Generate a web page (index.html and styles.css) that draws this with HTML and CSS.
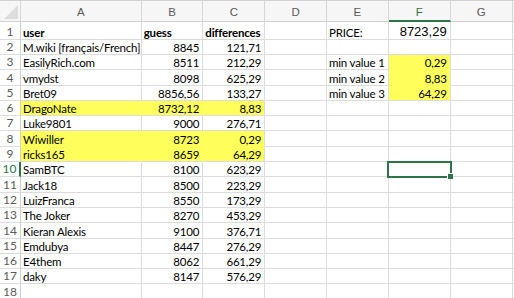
FILE: index.html
```html
<!DOCTYPE html>
<html lang="fr">
<head>
<meta charset="utf-8">
<title>Sheet</title>
<link rel="stylesheet" href="styles.css">
</head>
<body>
<div class="sheet">
  <div class="row hdr">
    <div class="corner"><span class="tri"></span></div>
    <div class="ch">A</div><div class="ch">B</div><div class="ch">C</div><div class="ch">D</div><div class="ch">E</div><div class="ch act">F</div><div class="ch">G</div><div class="ch"></div>
  </div>
  <div class="row">
    <div class="rh">1</div><div class="c b">user</div><div class="c b">guess</div><div class="c b">differences</div><div class="c"></div><div class="c">PRICE:</div><div class="c n big">8723,29</div><div class="c"></div><div class="c"></div>
  </div>
  <div class="row">
    <div class="rh">2</div><div class="c">M.wiki [français/French]</div><div class="c n">8845</div><div class="c n">121,71</div><div class="c"></div><div class="c"></div><div class="c"></div><div class="c"></div><div class="c"></div>
  </div>
  <div class="row">
    <div class="rh">3</div><div class="c">EasilyRich.com</div><div class="c n">8511</div><div class="c n">212,29</div><div class="c"></div><div class="c">min value 1</div><div class="c n y yb">0,29</div><div class="c"></div><div class="c"></div>
  </div>
  <div class="row">
    <div class="rh">4</div><div class="c">vmydst</div><div class="c n">8098</div><div class="c n">625,29</div><div class="c"></div><div class="c">min value 2</div><div class="c n y yb">8,83</div><div class="c"></div><div class="c"></div>
  </div>
  <div class="row">
    <div class="rh">5</div><div class="c">Bret09</div><div class="c n">8856,56</div><div class="c n">133,27</div><div class="c"></div><div class="c">min value 3</div><div class="c n y">64,29</div><div class="c"></div><div class="c"></div>
  </div>
  <div class="row">
    <div class="rh">6</div><div class="c y yr">DragoNate</div><div class="c n y yr">8732,12</div><div class="c n y">8,83</div><div class="c"></div><div class="c"></div><div class="c"></div><div class="c"></div><div class="c"></div>
  </div>
  <div class="row">
    <div class="rh">7</div><div class="c">Luke9801</div><div class="c n">9000</div><div class="c n">276,71</div><div class="c"></div><div class="c"></div><div class="c"></div><div class="c"></div><div class="c"></div>
  </div>
  <div class="row">
    <div class="rh">8</div><div class="c y yr yb">Wiwiller</div><div class="c n y yr yb">8723</div><div class="c n y yb">0,29</div><div class="c"></div><div class="c"></div><div class="c"></div><div class="c"></div><div class="c"></div>
  </div>
  <div class="row">
    <div class="rh">9</div><div class="c y yr">ricks165</div><div class="c n y yr">8659</div><div class="c n y">64,29</div><div class="c"></div><div class="c"></div><div class="c"></div><div class="c"></div><div class="c"></div>
  </div>
  <div class="row">
    <div class="rh act">10</div><div class="c">SamBTC</div><div class="c n">8100</div><div class="c n">623,29</div><div class="c"></div><div class="c"></div><div class="c sel"></div><div class="c"></div><div class="c"></div>
  </div>
  <div class="row">
    <div class="rh">11</div><div class="c">Jack18</div><div class="c n">8500</div><div class="c n">223,29</div><div class="c"></div><div class="c"></div><div class="c"></div><div class="c"></div><div class="c"></div>
  </div>
  <div class="row">
    <div class="rh">12</div><div class="c">LuizFranca</div><div class="c n">8550</div><div class="c n">173,29</div><div class="c"></div><div class="c"></div><div class="c"></div><div class="c"></div><div class="c"></div>
  </div>
  <div class="row">
    <div class="rh">13</div><div class="c">The Joker</div><div class="c n">8270</div><div class="c n">453,29</div><div class="c"></div><div class="c"></div><div class="c"></div><div class="c"></div><div class="c"></div>
  </div>
  <div class="row">
    <div class="rh">14</div><div class="c">Kieran Alexis</div><div class="c n">9100</div><div class="c n">376,71</div><div class="c"></div><div class="c"></div><div class="c"></div><div class="c"></div><div class="c"></div>
  </div>
  <div class="row">
    <div class="rh">15</div><div class="c">Emdubya</div><div class="c n">8447</div><div class="c n">276,29</div><div class="c"></div><div class="c"></div><div class="c"></div><div class="c"></div><div class="c"></div>
  </div>
  <div class="row">
    <div class="rh">16</div><div class="c">E4them</div><div class="c n">8062</div><div class="c n">661,29</div><div class="c"></div><div class="c"></div><div class="c"></div><div class="c"></div><div class="c"></div>
  </div>
  <div class="row">
    <div class="rh">17</div><div class="c">daky</div><div class="c n">8147</div><div class="c n">576,29</div><div class="c"></div><div class="c"></div><div class="c"></div><div class="c"></div><div class="c"></div>
  </div>
  <div class="row">
    <div class="rh">18</div><div class="c"></div><div class="c"></div><div class="c"></div><div class="c"></div><div class="c"></div><div class="c"></div><div class="c"></div><div class="c"></div>
  </div>
</div>
</body>
</html>
```
FILE: styles.css
```css
html, body {
  margin: 0;
  padding: 0;
  background: #ffffff;
  overflow: hidden;
}
.sheet {
  width: 514px;
  height: 298px;
  overflow: hidden;
  display: grid;
  grid-template-rows: 21px 17.7px repeat(17, 15.3px);
  border-top: 1px solid #d2d2d2;
  box-sizing: border-box;
  font-family: Lato, "Liberation Sans", sans-serif;
  font-size: 11.5px;
  letter-spacing: -0.18px;
  color: #000;
}
.row {
  display: grid;
  grid-template-columns: 21px 120.7px 61.6px 62px 61.7px 61.7px 62px 62px 1fr;
}
.row > div {
  box-sizing: border-box;
  border-right: 1px solid #dcdcdc;
  border-bottom: 1px solid #dcdcdc;
  min-width: 0;
  white-space: nowrap;
  overflow: visible;
}
.hdr > div {
  background: #f6f6f6;
  border-bottom-color: #cfcfcf;
  border-right-color: #d6d6d6;
}
.corner {
  position: relative;
}
.tri {
  position: absolute;
  right: 2px;
  bottom: 2px;
  width: 14px;
  height: 14px;
  background: #dcdcdc;
  clip-path: polygon(100% 0, 100% 100%, 0 100%);
}
.ch {
  display: flex;
  align-items: center;
  justify-content: center;
  font-family: "Liberation Sans", Arial, sans-serif;
  font-size: 11.5px;
  letter-spacing: 0;
  color: #5a5a5a;
  padding-top: 2px;
}
.ch.act {
  color: #2f7445;
  border-bottom: 2px solid #2f7445 !important;
}
.rh {
  display: flex;
  align-items: flex-end;
  justify-content: center;
  font-family: Lato, "Liberation Sans", Arial, sans-serif;
  font-size: 12px;
  letter-spacing: 0;
  line-height: 11px;
  padding-bottom: 2px;
  color: #5a5a5a;
  background: #ffffff;
  border-right-color: #cfcfcf !important;
}
.rh.act {
  color: #2f7445;
  border-right: 2px solid #2f7445 !important;
}
.c {
  display: flex;
  align-items: flex-end;
  padding: 0 2px 0 2px;
  line-height: 13px;
}
.b {
  font-weight: 700;
}
.n {
  justify-content: flex-end;
  padding-right: 3px;
}
.big {
  font-family: "Liberation Sans", Arial, sans-serif;
  font-size: 13px;
  letter-spacing: 0;
  line-height: 14px;
}
.y {
  background: #ffff5c;
}
.yr {
  border-right-color: #ffff5c !important;
}
.yb {
  border-bottom-color: #ffff5c !important;
}
.sel {
  position: relative;
}
.sel::before {
  content: "";
  position: absolute;
  left: -2px;
  top: -1px;
  right: -2px;
  bottom: -2px;
  border: 2px solid #2f7445;
}
.sel::after {
  content: "";
  position: absolute;
  right: -3px;
  bottom: -3px;
  width: 5px;
  height: 5px;
  background: #2f7445;
  border: 1px solid #ffffff;
  border-right: 0;
  border-bottom: 0;
}
```
